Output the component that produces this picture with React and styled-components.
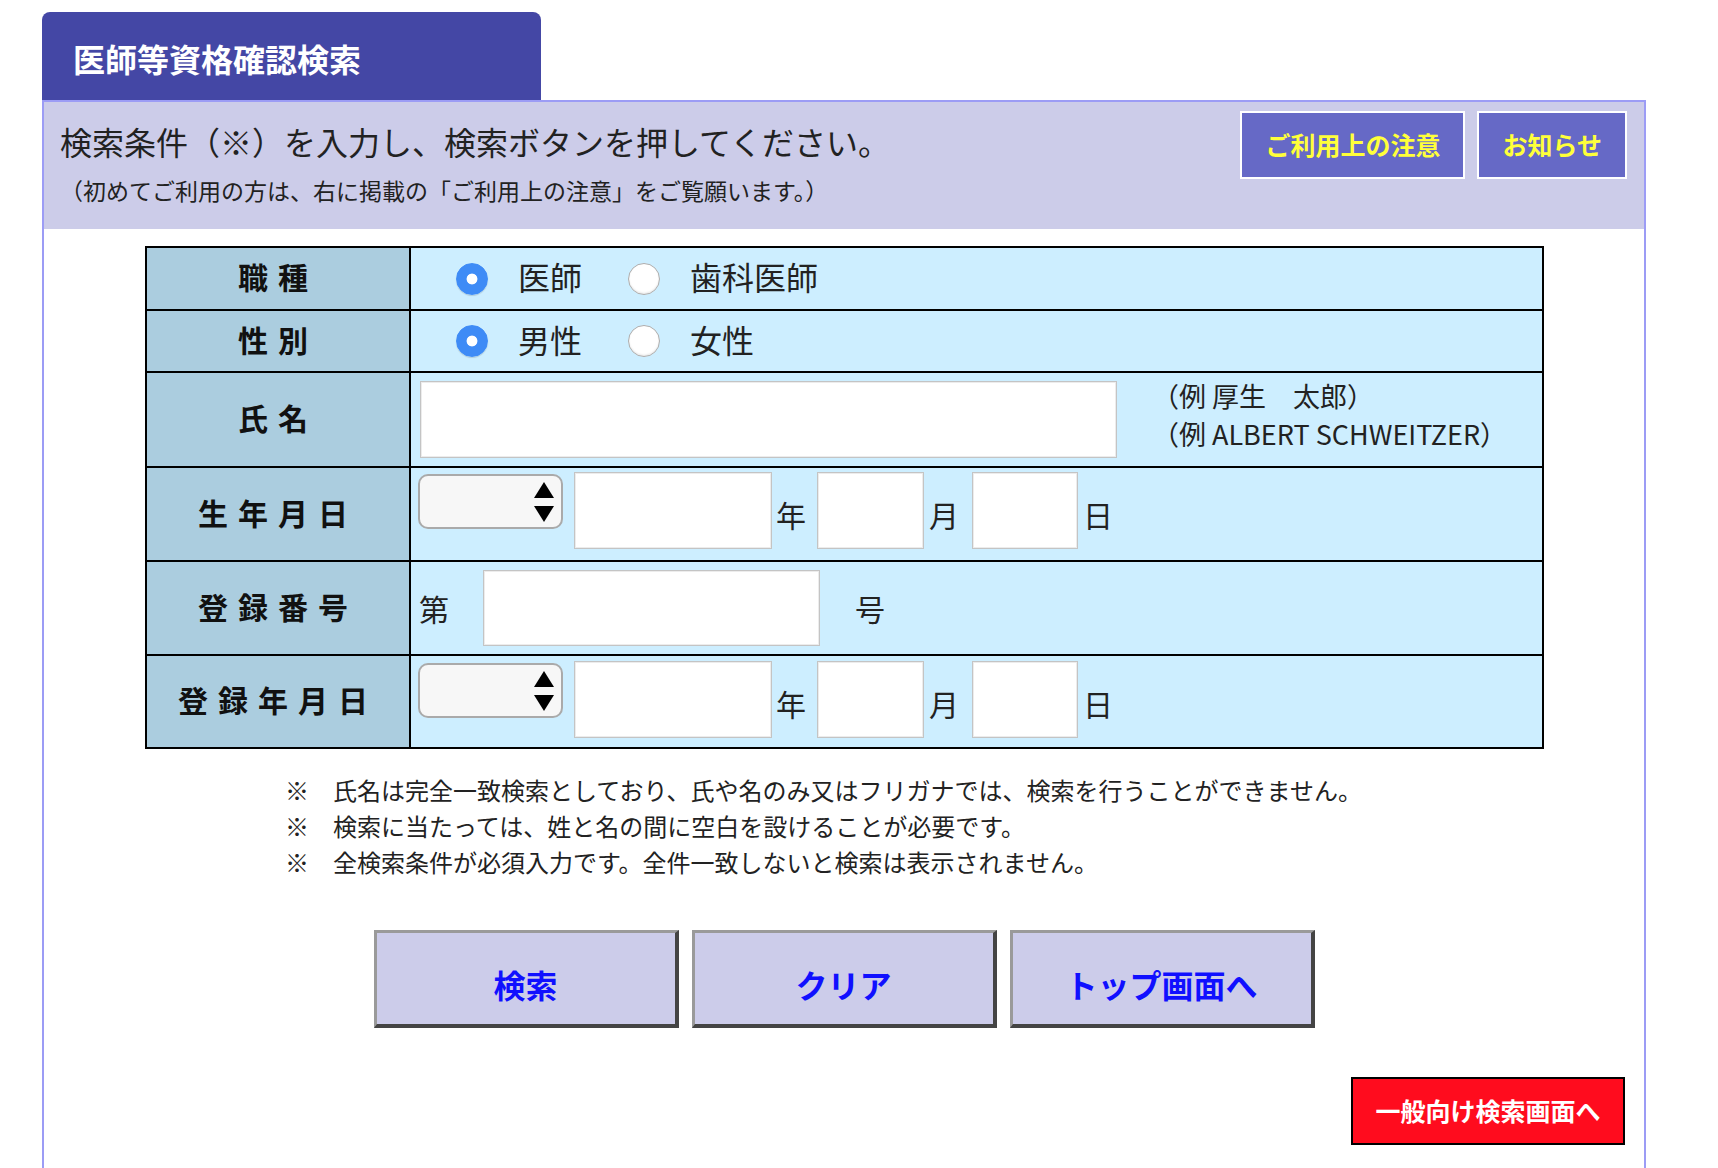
import React from "react";
import styled, { createGlobalStyle } from "styled-components";

const GlobalStyle = createGlobalStyle`
  * {
    box-sizing: border-box;
  }

  body {
    margin: 0;
    background: #ffffff;
    color: #222;
    font-family: "Noto Sans CJK JP", "Noto Sans", sans-serif;
  }
`;

const Page = styled.div`
  width: 1646px;
  padding: 12px 0 0 42px;
`;

const Tab = styled.h1`
  margin: 0;
  width: 499px;
  height: 88px;
  display: flex;
  align-items: center;
  padding: 3px 0 0 31px;
  background: #4447a5;
  border-radius: 8px 8px 0 0;
  color: #ffffff;
  font-size: 32px;
  font-weight: 700;
`;

const Panel = styled.section`
  width: 1604px;
  border: 2px solid #9c9cf5;
  border-bottom: none;
  padding-bottom: 40px;
`;

const Head = styled.div`
  height: 127px;
  display: flex;
  justify-content: space-between;
  align-items: flex-start;
  padding: 9px 17px 0 16px;
  background: #cccce9;
`;

const Intro = styled.div`
  padding-top: 8px;
`;

const Lead = styled.p`
  margin: 0;
  font-size: 32px;
  line-height: 44px;
  color: #222;
`;

const Sub = styled.p`
  margin: 12px 0 0;
  font-size: 23px;
  line-height: 30px;
  color: #222;
`;

const HeadButtons = styled.div`
  display: flex;
  gap: 12px;
`;

const HeadButton = styled.button`
  height: 68px;
  padding: 0 23px 3px;
  background: #6669c6;
  border: 2px solid #ffffff;
  color: #ffff3a;
  font-family: inherit;
  font-size: 25px;
  font-weight: 700;
  cursor: pointer;
`;

const Form = styled.div`
  width: 1399px;
  margin: 17px 0 0 101px;
  display: grid;
  grid-template-columns: 262px 1fr;
  grid-template-rows: 61px 60px 93px 92px 92px 91px;
  gap: 2px;
  background: #000;
  border: 2px solid #000;
`;

const Label = styled.div`
  display: flex;
  align-items: center;
  justify-content: center;
  padding-bottom: 5px;
  background: #abcddf;
  color: #111;
  font-size: 30px;
  font-weight: 700;
  letter-spacing: 10px;
`;

const Value = styled.div`
  display: flex;
  align-items: ${(p) => p.$align || "center"};
  padding: ${(p) => p.$pad || "0"};
  background: #cdeeff;
`;

const RadioGroup = styled.div`
  display: flex;
  align-items: center;
  gap: 46px;
  padding-left: 45px;
`;

const RadioItem = styled.label`
  display: flex;
  align-items: center;
  gap: 30px;
  font-size: 32px;
  line-height: 1;
  color: #222;
`;

const RadioText = styled.span`
  margin-bottom: 5px;
`;

const Radio = styled.input.attrs({ type: "radio" })`
  appearance: none;
  margin: 0;
  width: 32px;
  height: 32px;
  border-radius: 50%;
  background: #ffffff;
  border: 1px solid #adadad;
  box-shadow: inset 0 -1px 2px rgba(0, 0, 0, 0.1);

  &:checked {
    border-color: #3e8bf6;
    background: radial-gradient(circle, #ffffff 0 5px, #3e8bf6 5.8px);
    box-shadow: 0 1px 1px rgba(0, 0, 0, 0.15);
  }
`;

const TextInput = styled.input.attrs({ type: "text" })`
  width: ${(p) => p.$w}px;
  height: ${(p) => p.$h || 77}px;
  margin: 0;
  padding: 0 8px;
  background: #ffffff;
  border: 1px solid #c4c4c4;
  box-shadow: inset 0 0 0 1px #ececec;
  font-family: inherit;
  font-size: 24px;
`;

const Examples = styled.div`
  margin: 0 0 10px 35px;
  font-size: 27px;
  line-height: 38px;
  color: #222;
`;

const SelectWrap = styled.div`
  position: relative;
  margin: 2px 11px 0 0;
`;

const Select = styled.select`
  appearance: none;
  width: 145px;
  height: 55px;
  margin: 0;
  background: #f7f7f7;
  border: 2px solid #aaaaaa;
  border-radius: 10px;
  font-family: inherit;
`;

const Arrows = styled.svg`
  position: absolute;
  top: 8px;
  right: 9px;
  pointer-events: none;
`;

const Unit = styled.span`
  margin: ${(p) => p.$top ?? 27}px ${(p) => p.$right || 0}px 0 ${(p) => p.$left || 0}px;
  font-size: 30px;
  line-height: 30px;
  color: #222;
`;

const Notes = styled.ul`
  list-style: none;
  margin: 23px 0 0 241px;
  padding: 0;
  font-size: 24px;
  line-height: 36px;
  color: #222;
`;

const Actions = styled.div`
  display: flex;
  justify-content: center;
  gap: 13px;
  margin-top: 50px;
`;

const ActionButton = styled.button`
  width: 305px;
  height: 98px;
  padding: 10px 0 0;
  background: #ccccea;
  border-style: solid;
  border-width: 3px 4px 4px 3px;
  border-color: #9a9a9a #444444 #444444 #9a9a9a;
  color: #1010ff;
  font-family: inherit;
  font-size: 32px;
  font-weight: 700;
  cursor: pointer;
`;

const PublicRow = styled.div`
  display: flex;
  justify-content: flex-end;
  margin-top: 49px;
  padding-right: 19px;
`;

const PublicButton = styled.button`
  width: 274px;
  height: 68px;
  padding: 0 0 3px;
  background: #ff0c1e;
  border: 2px solid #000;
  color: #ffffff;
  font-family: inherit;
  font-size: 25px;
  font-weight: 700;
  cursor: pointer;
`;

const EraSelect = () => (
  <SelectWrap>
    <Select defaultValue="">
      <option value=""></option>
      <option value="S">昭和</option>
      <option value="H">平成</option>
      <option value="R">令和</option>
    </Select>
    <Arrows width="20" height="40" viewBox="0 0 20 40">
      <path d="M10 0 L20 16 L0 16 Z" fill="#000" />
      <path d="M0 24 L20 24 L10 40 Z" fill="#000" />
    </Arrows>
  </SelectWrap>
);

const DateFields = () => (
  <>
    <EraSelect />
    <TextInput $w={198} />
    <Unit $left={4} $right={11}>年</Unit>
    <TextInput $w={107} />
    <Unit $left={5} $right={13}>月</Unit>
    <TextInput $w={106} />
    <Unit $left={5}>日</Unit>
  </>
);

const RadioOption = ({ name, label, checked }) => (
  <RadioItem>
    <Radio name={name} defaultChecked={checked} />
    <RadioText>{label}</RadioText>
  </RadioItem>
);

const App = () => {
  return (
    <Page>
      <GlobalStyle />
      <Tab>医師等資格確認検索</Tab>
      <Panel>
        <Head>
          <Intro>
            <Lead>検索条件（※）を入力し、検索ボタンを押してください。</Lead>
            <Sub>（初めてご利用の方は、右に掲載の「ご利用上の注意」をご覧願います。）</Sub>
          </Intro>
          <HeadButtons>
            <HeadButton>ご利用上の注意</HeadButton>
            <HeadButton>お知らせ</HeadButton>
          </HeadButtons>
        </Head>

        <Form>
          <Label>職種</Label>
          <Value>
            <RadioGroup>
              <RadioOption name="job" label="医師" checked />
              <RadioOption name="job" label="歯科医師" />
            </RadioGroup>
          </Value>

          <Label>性別</Label>
          <Value>
            <RadioGroup>
              <RadioOption name="sex" label="男性" checked />
              <RadioOption name="sex" label="女性" />
            </RadioGroup>
          </Value>

          <Label>氏名</Label>
          <Value $pad="0 0 0 9px">
            <TextInput $w={697} />
            <Examples>
              <div>（例 厚生　太郎）</div>
              <div>（例 ALBERT SCHWEITZER）</div>
            </Examples>
          </Value>

          <Label>生年月日</Label>
          <Value $align="flex-start" $pad="4px 0 0 7px">
            <DateFields />
          </Value>

          <Label>登録番号</Label>
          <Value $pad="0 0 0 8px">
            <Unit $top={0} $right={34}>第</Unit>
            <TextInput $w={337} $h={76} />
            <Unit $top={0} $left={35}>号</Unit>
          </Value>

          <Label>登録年月日</Label>
          <Value $align="flex-start" $pad="5px 0 0 7px">
            <DateFields />
          </Value>
        </Form>

        <Notes>
          <li>※　氏名は完全一致検索としており、氏や名のみ又はフリガナでは、検索を行うことができません。</li>
          <li>※　検索に当たっては、姓と名の間に空白を設けることが必要です。</li>
          <li>※　全検索条件が必須入力です。全件一致しないと検索は表示されません。</li>
        </Notes>

        <Actions>
          <ActionButton>検索</ActionButton>
          <ActionButton>クリア</ActionButton>
          <ActionButton>トップ画面へ</ActionButton>
        </Actions>

        <PublicRow>
          <PublicButton>一般向け検索画面へ</PublicButton>
        </PublicRow>
      </Panel>
    </Page>
  );
};

export default App;
